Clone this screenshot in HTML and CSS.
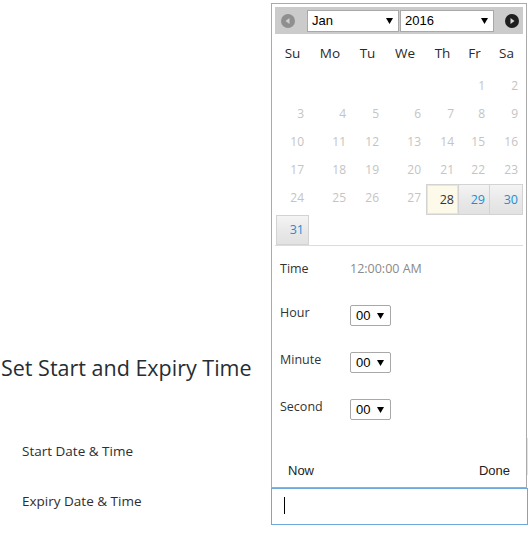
FILE: index.html
```html
<!DOCTYPE html>
<html>
<head>
<meta charset="utf-8">
<link rel="stylesheet" href="styles.css">
</head>
<body>
<div class="page">
  <h2 class="title">Set Start and Expiry Time</h2>
  <div class="form">
    <div class="row">
      <div class="label">Start Date &amp; Time</div>
      <div class="input"></div>
    </div>
    <div class="row">
      <div class="label">Expiry Date &amp; Time</div>
      <div class="input focused"><span class="caret"></span></div>
    </div>
  </div>
</div>

<div class="picker">
  <div class="dp-head">
    <svg class="nav" width="14" height="14" viewBox="0 0 14 14"><circle cx="7" cy="7" r="7" fill="#8f8f8f"/><polygon points="8.5,4 8.5,10 4.5,7" fill="#d0d0d0"/></svg>
    <div class="sel sel-month"><span>Jan</span><svg width="7" height="6" viewBox="0 0 7 6"><polygon points="0,0 7,0 3.5,6" fill="#000"/></svg></div>
    <div class="sel sel-year"><span>2016</span><svg width="7" height="6" viewBox="0 0 7 6"><polygon points="0,0 7,0 3.5,6" fill="#000"/></svg></div>
    <svg class="nav nav-next" width="14" height="14" viewBox="0 0 14 14"><circle cx="7" cy="7" r="7" fill="#1e1e1e"/><polygon points="5.5,4 5.5,10 9.5,7" fill="#d8d8d8"/></svg>
  </div>
  <div class="dp-grid">
    <div class="dn">Su</div><div class="dn">Mo</div><div class="dn">Tu</div><div class="dn">We</div><div class="dn">Th</div><div class="dn">Fr</div><div class="dn">Sa</div>
    <div></div><div></div><div></div><div></div><div></div><div class="d">1</div><div class="d">2</div>
    <div class="d">3</div><div class="d">4</div><div class="d">5</div><div class="d">6</div><div class="d">7</div><div class="d">8</div><div class="d">9</div>
    <div class="d">10</div><div class="d">11</div><div class="d">12</div><div class="d">13</div><div class="d">14</div><div class="d">15</div><div class="d">16</div>
    <div class="d">17</div><div class="d">18</div><div class="d">19</div><div class="d">20</div><div class="d">21</div><div class="d">22</div><div class="d">23</div>
    <div class="d">24</div><div class="d">25</div><div class="d">26</div><div class="d">27</div><div class="d today">28</div><div class="d active join">29</div><div class="d active join">30</div>
    <div class="d active">31</div>
  </div>
  <div class="dp-sep"></div>
  <div class="dp-time">
    <div class="t-row t-first"><div class="t-label">Time</div><div class="t-value">12:00:00 AM</div></div>
    <div class="t-row t-hour"><div class="t-label">Hour</div><div class="tsel"><span>00</span><svg width="7" height="6" viewBox="0 0 7 6"><polygon points="0,0 7,0 3.5,6" fill="#000"/></svg></div></div>
    <div class="t-row"><div class="t-label">Minute</div><div class="tsel"><span>00</span><svg width="7" height="6" viewBox="0 0 7 6"><polygon points="0,0 7,0 3.5,6" fill="#000"/></svg></div></div>
    <div class="t-row"><div class="t-label">Second</div><div class="tsel"><span>00</span><svg width="7" height="6" viewBox="0 0 7 6"><polygon points="0,0 7,0 3.5,6" fill="#000"/></svg></div></div>
  </div>
  <div class="dp-foot">
    <span class="btn">Now</span>
    <span class="btn">Done</span>
  </div>
</div>
</body>
</html>
```

FILE: styles.css
```css
body {
  margin: 0;
  font-family: "Open Sans", "Noto Sans", sans-serif;
  color: #333;
  background: #fff;
}

.page {
  padding-top: 353px;
}

.title {
  margin: 0 0 0 1px;
  font-size: 21.5px;
  font-weight: 400;
  line-height: 30px;
  color: #262d33;
}

.form {
  margin-top: 55px;
}

.row {
  display: flex;
  height: 37px;
}

.row + .row {
  margin-top: 13px;
}

.label {
  width: 249px;
  padding: 3px 0 0 22px;
  font-size: 13.5px;
  line-height: 20px;
  color: #2e2e2e;
}

.input {
  width: 257px;
  height: 37px;
  box-sizing: border-box;
  border: 1px solid #e2e2e2;
}

.input.focused {
  border-color: #6ea8dc;
  padding: 8px 12px;
}

.caret {
  display: block;
  width: 1px;
  height: 17px;
  background: #000;
}

/* date picker popup */
.picker {
  position: absolute;
  left: 271px;
  top: 3px;
  width: 256px;
  height: 485px;
  box-sizing: border-box;
  border: 1px solid #aaa;
  background: #fff;
  padding: 3px 3px 0;
  display: flex;
  flex-direction: column;
}

.dp-head {
  height: 27px;
  background: #cbcbcb;
  display: flex;
  align-items: center;
  padding-left: 6px;
}

.nav {
  display: block;
  flex: none;
}

.nav-next {
  margin-left: 11px;
}

.sel {
  height: 22px;
  box-sizing: border-box;
  border: 1px solid #a8a8a8;
  background: #fff;
  display: flex;
  align-items: center;
  justify-content: space-between;
  padding: 0 5px 0 4px;
  font-family: "Liberation Sans", Arial, sans-serif;
  font-size: 13px;
  color: #000;
}

.sel-month {
  width: 92px;
  margin-left: 12px;
}

.sel-year {
  width: 94px;
  margin-left: 1px;
}

.dp-grid {
  display: grid;
  grid-template-columns: 33px 42px 33px 42px 33px 31px 33px;
  grid-template-rows: 38px 28px 28px 28px 28px 31px 30px;
  margin-left: 1px;
}

.dn {
  text-align: center;
  line-height: 38px;
  font-size: 13.5px;
  color: #2a2a2a;
}

.d {
  text-align: right;
  padding-right: 5px;
  line-height: 28px;
  font-size: 12px;
  color: #c4c4c4;
}

.today,
.active {
  box-sizing: border-box;
  border: 1px solid #d3d3d3;
  line-height: 29px;
  padding-right: 4px;
  font-size: 12.5px;
}

.today {
  background: #fdfaea;
  box-shadow: inset 0 0 0 1px #f7e8a4;
  color: #333;
}

.active {
  background: linear-gradient(#f4f4f4, #e8e8e8 55%, #e2e2e2);
  color: #1b8fd5;
}

.join {
  margin-left: -1px;
}

.dp-grid .active:last-child {
  line-height: 28px;
}

.dp-sep {
  height: 1px;
  background: #dcdcdc;
}

.dp-time {
  padding-left: 5px;
}

.t-row {
  display: flex;
  align-items: flex-start;
  margin-top: 26px;
}

.t-first {
  margin-top: 14px;
  line-height: 18px;
}

.t-hour {
  margin-top: 27px;
}

.t-label {
  width: 70px;
  font-size: 12.5px;
  line-height: 16px;
  color: #333;
}

.t-first .t-label {
  line-height: 18px;
}

.t-value {
  font-size: 12.5px;
  line-height: 18px;
  color: #8a8a8a;
}

.tsel {
  width: 41px;
  height: 21px;
  box-sizing: border-box;
  border: 1px solid #a8a8a8;
  border-radius: 2px;
  background: #fff;
  display: flex;
  align-items: center;
  justify-content: space-between;
  padding: 0 6px 0 5px;
  font-family: "Liberation Sans", Arial, sans-serif;
  font-size: 13px;
  color: #000;
}

.dp-foot {
  margin-top: auto;
  height: 31px;
  padding: 0 13px 1px;
  display: flex;
  justify-content: space-between;
  align-items: center;
  font-family: "Liberation Sans", Arial, sans-serif;
  font-size: 13px;
  color: #222;
}
```
